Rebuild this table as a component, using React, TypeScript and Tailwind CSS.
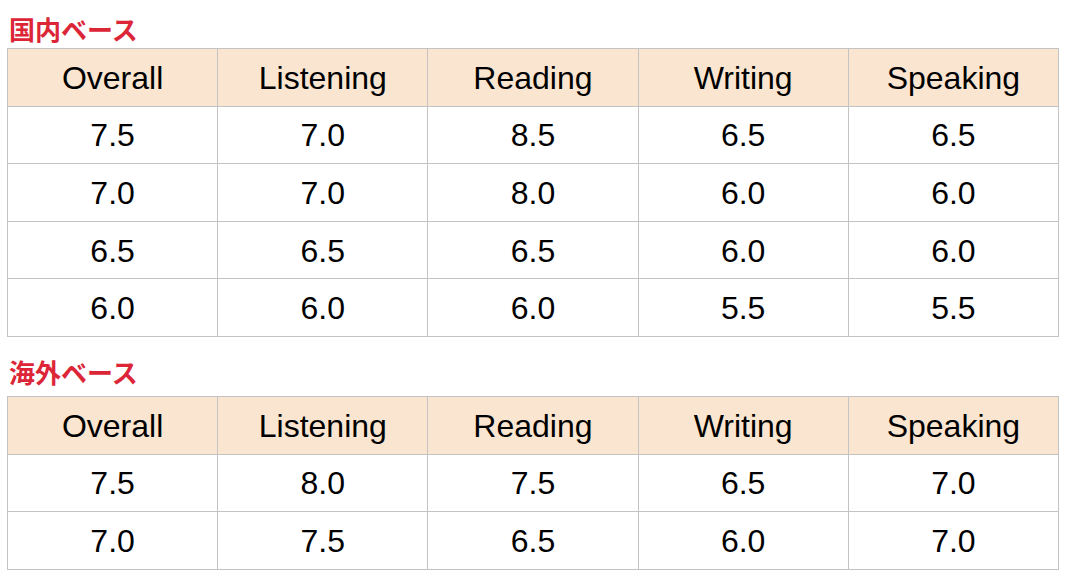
const headers = ['Overall', 'Listening', 'Reading', 'Writing', 'Speaking'];

const domestic = [
  ['7.5', '7.0', '8.5', '6.5', '6.5'],
  ['7.0', '7.0', '8.0', '6.0', '6.0'],
  ['6.5', '6.5', '6.5', '6.0', '6.0'],
  ['6.0', '6.0', '6.0', '5.5', '5.5'],
];

const overseas = [
  ['7.5', '8.0', '7.5', '6.5', '7.0'],
  ['7.0', '7.5', '6.5', '6.0', '7.0'],
];

function ScoreTable({ rows }: { rows: string[][] }) {
  return (
    <table className="w-[1052px] table-fixed border-collapse text-[32px] text-black [font-family:'Liberation_Sans',Arial,sans-serif]">
      <thead>
        <tr className="h-[57.6px] bg-[#fae5d0]">
          {headers.map((h) => (
            <th key={h} className="border border-[#c3c3c3] p-0 pt-[1px] text-center font-normal">
              {h}
            </th>
          ))}
        </tr>
      </thead>
      <tbody>
        {rows.map((row, i) => (
          <tr key={i} className="h-[57.6px]">
            {row.map((v, j) => (
              <td key={j} className="border border-[#c3c3c3] p-0 pt-[1px] text-center">
                {v}
              </td>
            ))}
          </tr>
        ))}
      </tbody>
    </table>
  );
}

export default function App() {
  return (
    <div className="bg-white pl-[7px] w-[1074px] h-[579px] overflow-hidden">
      <div className="h-[48px] pt-[9px] flex items-center pl-[2px] text-[26px] font-bold text-[#dc2638] [font-family:'Noto_Sans_CJK_JP',sans-serif]">
        国内ベース
      </div>
      <ScoreTable rows={domestic} />
      <div className="mt-[11px] h-[48px] flex items-center pl-[2px] text-[26px] font-bold text-[#dc2638] [font-family:'Noto_Sans_CJK_JP',sans-serif]">
        海外ベース
      </div>
      <ScoreTable rows={overseas} />
    </div>
  );
}
